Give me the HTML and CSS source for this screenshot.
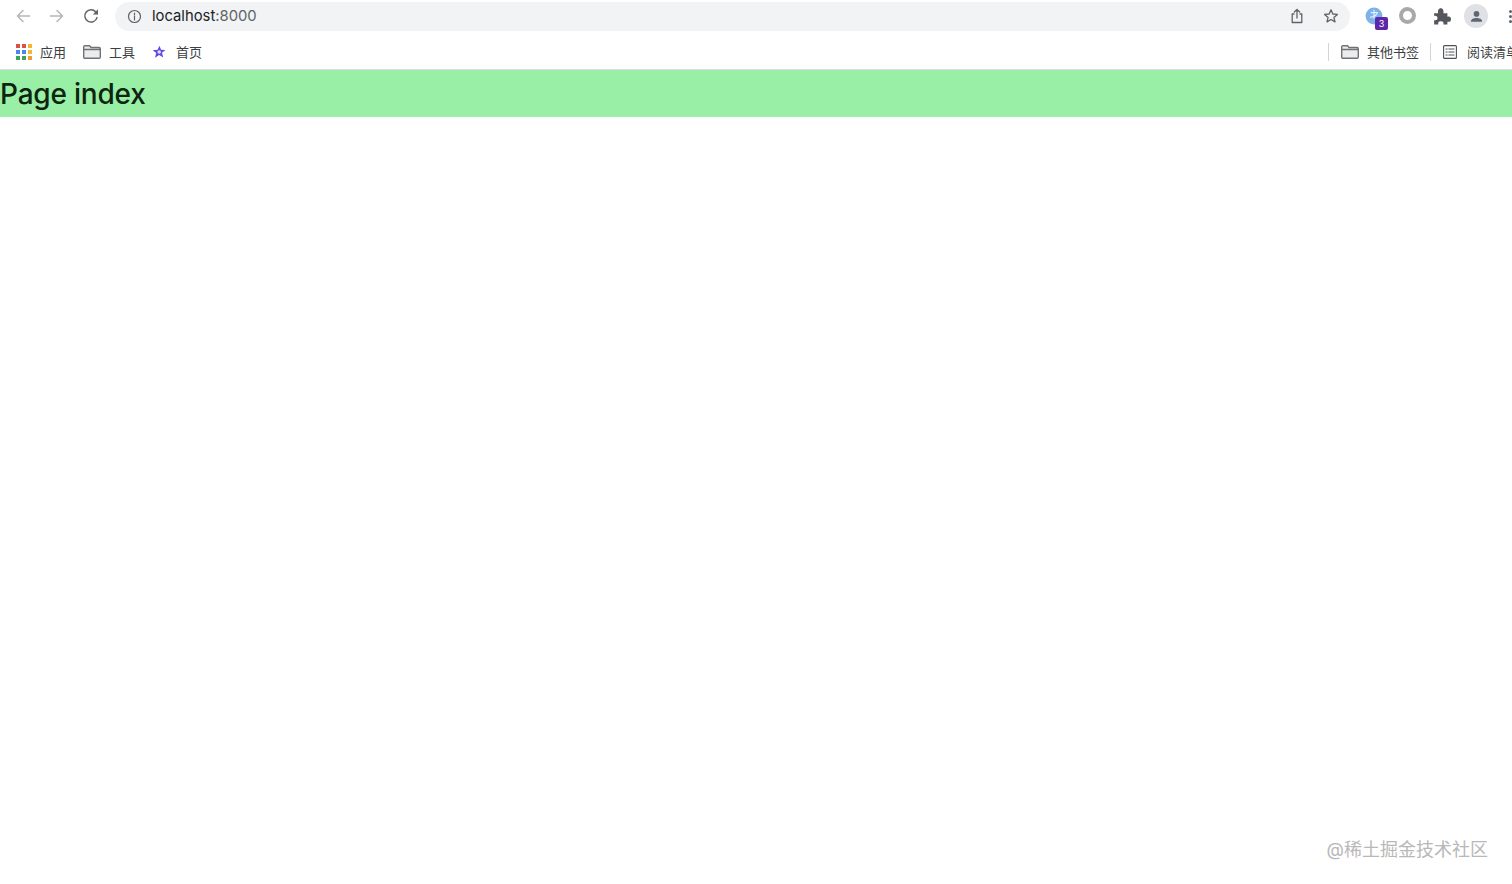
FILE: index.html
```html
<!DOCTYPE html>
<html lang="en">
<head>
  <meta charset="UTF-8">
  <title>Page index</title>
  <link rel="stylesheet" href="styles.css">
</head>
<body>

  <div class="toolbar">
    <svg class="nav-icon dim" viewBox="0 0 16 16"><path d="M14.5 8H2.5M8 2.500 2.500 8 8 13.500"/></svg>
    <svg class="nav-icon dim" viewBox="0 0 16 16"><path d="M1.500 8H13.500M8 2.500 13.500 8 8 13.500"/></svg>
    <svg class="nav-icon" viewBox="0 0 16 16"><path d="M14 9.600A6.200 6.200 0 1 1 12.800 3.900L14.200 5.400"/><path class="fill" d="M15 1.200V6.400H9.800Z"/></svg>

    <div class="omnibox">
      <svg class="info" viewBox="0 0 16 16"><circle cx="8" cy="8" r="6.400"/><path d="M8 7.200V11.600M8 4.400V5.800"/></svg>
      <span class="url">localhost<span class="port">:8000</span></span>
      <svg class="box-icon" viewBox="0 0 16 16"><path d="M5 6H3.200V14.500H12.800V6H11M8 10V1.500M5.300 4 8 1.500 10.700 4"/></svg>
      <svg class="box-icon last" viewBox="0 0 16 16"><path d="M8 1.800 9.800 6 14.400 6.400 10.900 9.400 12 13.900 8 11.500 4 13.900 5.100 9.400 1.600 6.400 6.200 6Z"/></svg>
    </div>

    <div class="ext ext-globe">
      <svg viewBox="0 0 16 16"><circle class="globe" cx="8" cy="8" r="7.500"/><path class="globe-line" d="M5.500 5H11M8 3V10M5 9C7 9 10 8 11 5"/></svg>
      <span class="badge">3</span>
    </div>
    <div class="ext"><span class="ring"></span></div>
    <div class="ext">
      <svg viewBox="0 0 16 16"><path class="fill-dark" d="M1 5.500H4.600C4 3 5 1 6.900 1S9.800 3 9.200 5.500H12.800V8.600C15 8 16 9.200 16 10.800S15 13.600 12.800 13V15.500H9.200C9.800 13.600 9 12.600 7 12.600S4.200 13.600 4.800 15.500H1V11.700C3 12.200 4 11.200 4 9.800S3 7.400 1 7.900Z"/></svg>
    </div>
    <div class="ext">
      <div class="avatar">
        <svg viewBox="0 0 16 16"><circle class="fill-slate" cx="8" cy="5.200" r="3"/><path class="fill-slate" d="M2 13.500C2 10.500 5 9.500 8 9.500S14 10.500 14 13.500Z"/></svg>
      </div>
    </div>
    <div class="menu-dots"><span></span><span></span><span></span></div>
  </div>

  <div class="bookmarks">
    <div class="mark">
      <div class="apps">
        <i class="r"></i><i class="r"></i><i class="y"></i>
        <i class="b"></i><i class="b"></i><i class="y"></i>
        <i class="g"></i><i class="g"></i><i class="o"></i>
      </div>
      <span>应用</span>
    </div>
    <div class="mark">
      <svg class="folder" viewBox="0 0 18 14"><path d="M.7 12V2C.7 1.300 1.200.7 2 .7H6.500L8 2.500H16C16.800 2.500 17.300 3 17.300 3.800V12C17.300 12.800 16.800 13.300 16 13.300H2C1.200 13.300.7 12.800.7 12ZM.7 4.500H17.300"/></svg>
      <span>工具</span>
    </div>
    <div class="mark mark-star">
      <svg class="star" viewBox="0 0 14 14"><path d="M7.500 .8 9 4.800 13.400 5 10 7.800 11.200 12.600 7.200 10 3 12.800 4.200 8 .8 5.200 5.600 4.800Z"/><circle cx="7.200" cy="7" r="1.800"/></svg>
      <span>首页</span>
    </div>
    <div class="spacer"></div>
    <div class="sep"></div>
    <div class="mark">
      <svg class="folder" viewBox="0 0 18 14"><path d="M.7 12V2C.7 1.300 1.200.7 2 .7H6.500L8 2.500H16C16.800 2.500 17.300 3 17.300 3.800V12C17.300 12.800 16.800 13.300 16 13.300H2C1.200 13.300.7 12.800.7 12ZM.7 4.500H17.300"/></svg>
      <span>其他书签</span>
    </div>
    <div class="sep"></div>
    <div class="mark last">
      <svg class="list" viewBox="0 0 14 14"><rect x=".6" y=".6" width="12.800" height="12.800" rx="1"/><path d="M3 4H4.200M3 7H4.200M3 10H4.200M5.800 4H11M5.800 7H11M5.800 10H11"/></svg>
      <span>阅读清单</span>
    </div>
  </div>

  <h1 class="page-title">Page index</h1>

  <div class="watermark">@稀土掘金技术社区</div>

</body>
</html>
```

FILE: styles.css
```css
html, body {
  height: 100%;
}

body {
  margin: 0;
  background: #fff;
  font-family: Inter, "Noto Sans CJK SC", sans-serif;
  overflow: hidden;
  position: relative;
}

svg {
  display: block;
  fill: none;
  stroke-linecap: round;
  stroke-linejoin: round;
}

/* top bar */
.toolbar {
  display: flex;
  align-items: center;
  height: 32px;
  padding-left: 15px;
  white-space: nowrap;
}

.nav-icon {
  width: 16px;
  height: 16px;
  margin-right: 18px;
  stroke: #5f6368;
  stroke-width: 1.5;
}

.nav-icon.dim {
  stroke: #b4b6b9;
}

.nav-icon .fill {
  fill: #5f6368;
  stroke: none;
}

.omnibox {
  display: flex;
  align-items: center;
  flex: none;
  width: 1235px;
  height: 29px;
  margin-left: -2px;
  padding-left: 12px;
  box-sizing: border-box;
  background: #f1f3f4;
  border-radius: 15px;
}

.info {
  width: 15px;
  height: 15px;
  stroke: #5f6368;
  stroke-width: 1.3;
}

.url {
  margin-left: 10px;
  font-size: 14.8px;
  color: #202124;
  flex: 1;
}

.port {
  color: #5f6368;
}

.box-icon {
  width: 16px;
  height: 16px;
  margin-right: 18px;
  stroke: #5f6368;
  stroke-width: 1.3;
}

.box-icon.last {
  margin-right: 11px;
}

.ext {
  width: 18px;
  height: 18px;
  margin-left: 16px;
  position: relative;
  flex: none;
}

.ext-globe {
  margin-left: 15px;
}

.globe {
  fill: #7fb2e8;
}

.globe-line {
  stroke: #e4f0fb;
  stroke-width: 1;
}

.badge {
  position: absolute;
  left: 10px;
  top: 10px;
  width: 13px;
  height: 13px;
  background: #5e27ab;
  color: #fff;
  font-size: 9px;
  line-height: 13px;
  text-align: center;
  border-radius: 2px;
}

.ring {
  display: block;
  width: 9px;
  height: 9px;
  border: 4px solid #a9a9a9;
  border-radius: 50%;
}

.fill-dark {
  fill: #54585c;
}

.fill-slate {
  fill: #5f6772;
}

.avatar {
  display: flex;
  align-items: center;
  justify-content: center;
  width: 24px;
  height: 24px;
  margin: -3px 0 0 -3px;
  background: #dfe1e5;
  border-radius: 50%;
}

.avatar svg {
  width: 15px;
  height: 15px;
}

.menu-dots {
  display: flex;
  flex-direction: column;
  gap: 2px;
  margin-left: 24px;
  flex: none;
}

.menu-dots span {
  width: 3px;
  height: 3px;
  background: #5f6368;
  border-radius: 50%;
}

/* bookmarks */
.bookmarks {
  display: flex;
  align-items: center;
  height: 38px;
  padding: 2px 0 0 16px;
  box-sizing: border-box;
  border-bottom: 1px solid #dadce0;
  font-size: 13px;
  color: #3c4043;
  white-space: nowrap;
  overflow: hidden;
}

.mark {
  display: flex;
  align-items: center;
  gap: 8px;
  margin-right: 17px;
  flex: none;
}

.mark-star {
  gap: 10px;
}

.mark.last {
  margin-right: -7px;
  gap: 10px;
}

.spacer {
  flex: 1;
}

.sep {
  width: 1px;
  height: 18px;
  background: #d3d5d8;
  margin: 0 12px 0 -6px;
  flex: none;
}

.apps {
  display: grid;
  grid-template-columns: repeat(3, 4px);
  grid-auto-rows: 4px;
  gap: 2px;
  width: 16px;
}

.apps i {
  display: block;
}

.apps .r { background: #dd5144; }
.apps .y { background: #f2b632; }
.apps .b { background: #4b86e8; }
.apps .g { background: #3da45c; }
.apps .o { background: #ef9a34; }

.folder {
  width: 18px;
  height: 14px;
  stroke: #6f7276;
  stroke-width: 1.4;
  fill: #ececec;
}

.star {
  width: 14px;
  height: 14px;
}

.star path {
  fill: #5b4be0;
}

.star circle {
  fill: #e6d9fa;
}

.list {
  width: 14px;
  height: 14px;
  stroke: #4d5156;
  stroke-width: 1.1;
}

/* page */
.page-title {
  margin: 0;
  height: 47px;
  background: #98efa5;
  color: #0d2410;
  font-size: 28px;
  font-weight: 500;
  line-height: 48px;
  letter-spacing: -0.2px;
}

.watermark {
  position: absolute;
  right: 24px;
  bottom: 23px;
  font-size: 18px;
  color: #b8b8b8;
}
```
